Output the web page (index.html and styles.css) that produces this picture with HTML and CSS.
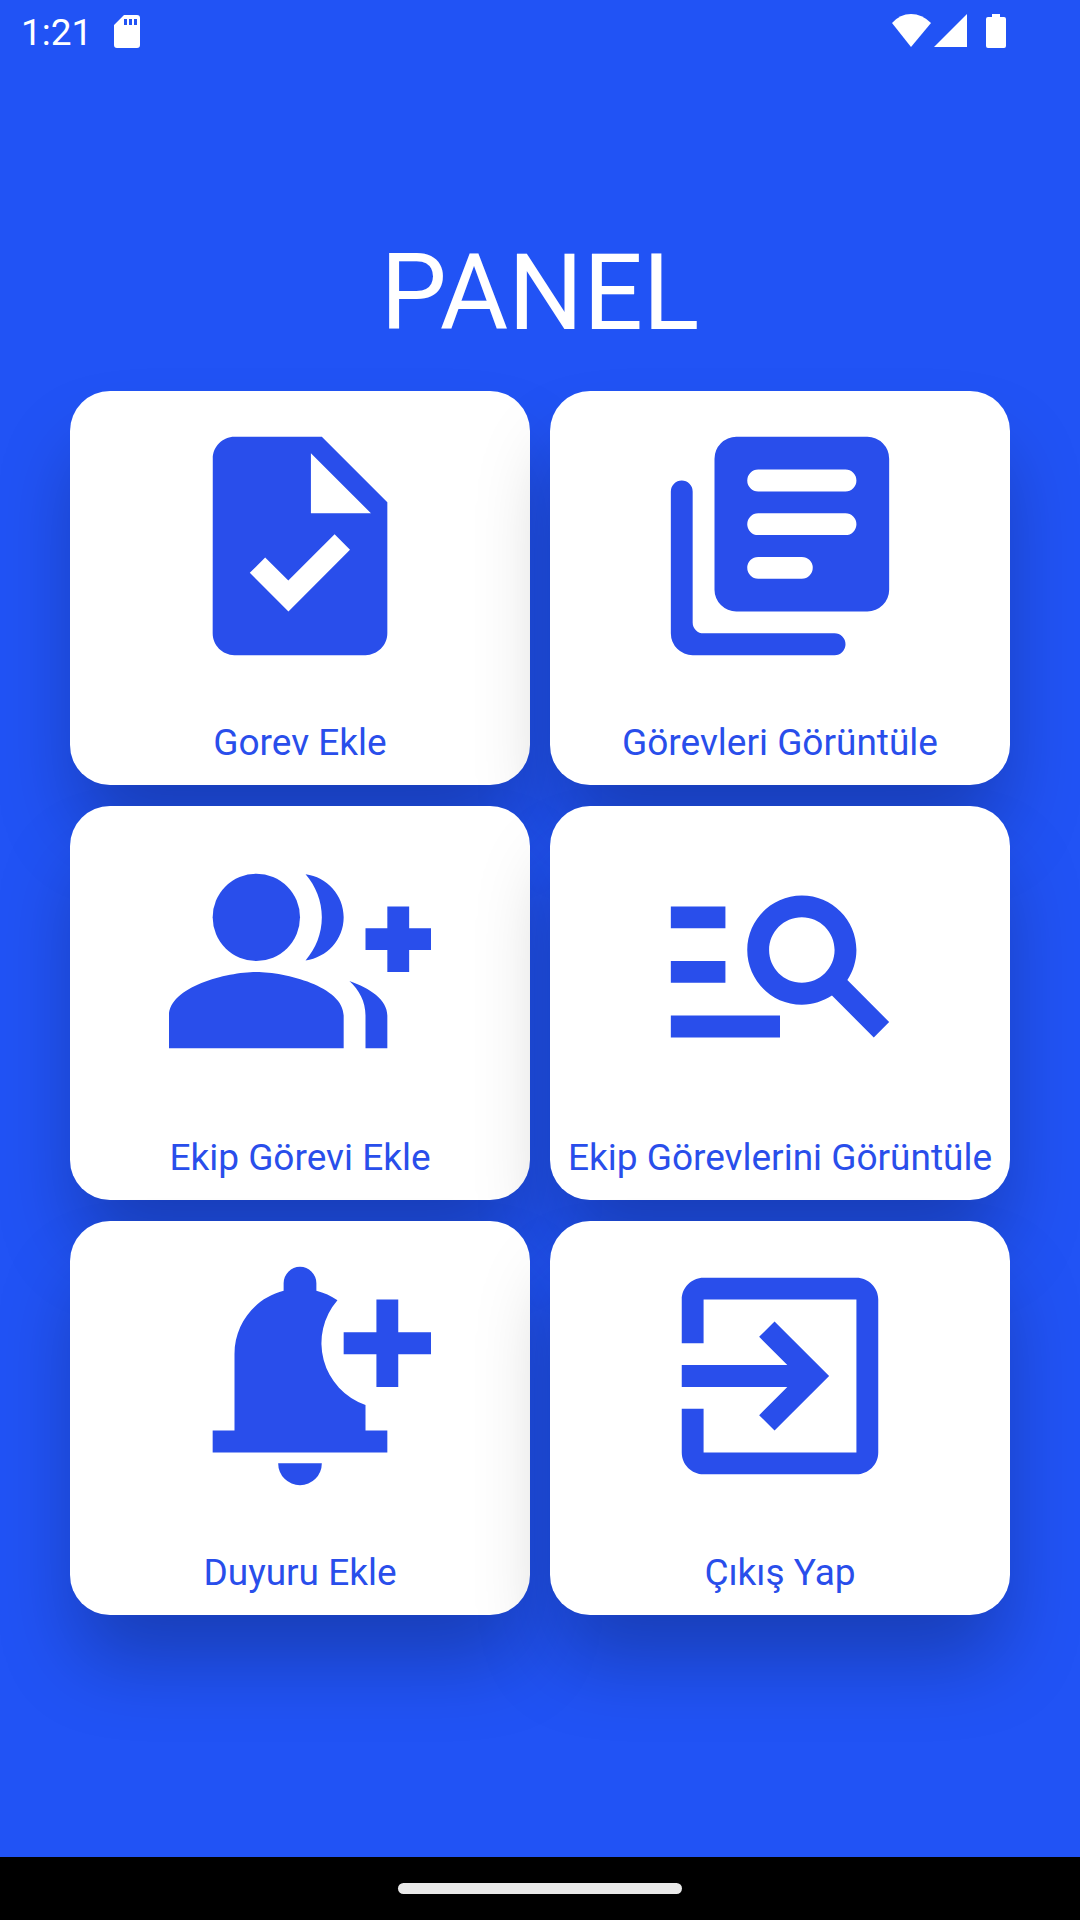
FILE: index.html
```html
<!DOCTYPE html>
<html lang="tr">
<head>
<meta charset="utf-8">
<meta name="viewport" content="width=device-width, initial-scale=1">
<title>Panel</title>
<link rel="stylesheet" href="styles.css">
</head>
<body>
<header class="status">
  <span class="status-time">1:21</span>
  <svg class="status-sd" viewBox="0 0 26 33" aria-hidden="true"><path fill-rule="evenodd" d="M10 0H23a3 3 0 0 1 3 3V30a3 3 0 0 1-3 3H3a3 3 0 0 1-3-3V10zM10 4v6h3V4zM15 4v6h3V4zM20 4v6h3V4z"/></svg>
  <div class="status-right">
    <svg class="status-wifi" viewBox="0 0 39 34" aria-hidden="true"><path d="M0 9Q8 0 19 0T39 9L19 33z"/></svg>
    <svg class="status-signal" viewBox="0 0 33 34" aria-hidden="true"><path d="M33 0V33H0z"/></svg>
    <svg class="status-battery" viewBox="0 0 20 34" aria-hidden="true"><path d="M6 0h8v3h4a2 2 0 0 1 2 2v27a2 2 0 0 1-2 2H2a2 2 0 0 1-2-2V5a2 2 0 0 1 2-2h4z"/></svg>
  </div>
</header>
<main class="panel">
  <h1 class="title">PANEL</h1>
  <div class="grid">
    <button class="card" type="button">
      <svg class="icon" viewBox="0 0 24 24" aria-hidden="true"><path d="M14 2H6c-1.1 0-1.99.9-1.99 2L4 20c0 1.1.89 2 1.99 2H18c1.1 0 2-.9 2-2V8l-6-6zm-3.06 16L7.4 14.46l1.41-1.41 2.12 2.12 4.24-4.24 1.41 1.41L10.94 18zM13 9V3.5L18.5 9H13z"/></svg>
      <span>Gorev Ekle</span>
    </button>
    <button class="card" type="button">
      <svg class="icon" viewBox="0 0 24 24" aria-hidden="true"><path fill-rule="evenodd" d="M8 2H20a2 2 0 0 1 2 2V16a2 2 0 0 1-2 2H8a2 2 0 0 1-2-2V4a2 2 0 0 1 2-2zM10 5a1 1 0 0 0 0 2h8a1 1 0 0 0 0-2zM10 9a1 1 0 0 0 0 2h8a1 1 0 0 0 0-2zM10 13a1 1 0 0 0 0 2h4a1 1 0 0 0 0-2z"/><path d="M3 6a1 1 0 0 1 1 1V19a1 1 0 0 0 1 1H17a1 1 0 0 1 0 2H4a2 2 0 0 1-2-2V7a1 1 0 0 1 1-1z"/></svg>
      <span>Görevleri Görüntüle</span>
    </button>
    <button class="card" type="button">
      <svg class="icon" viewBox="0 0 24 24" aria-hidden="true"><circle cx="8" cy="8" r="4"/><path d="M8 13c-2.67 0-8 1.34-8 4v3h16v-3c0-2.66-5.33-4-8-4zM12.51 4.05C13.43 5.11 14 6.49 14 8s-.57 2.89-1.49 3.95C14.47 11.7 16 10.04 16 8s-1.53-3.7-3.49-3.95zM16.53 13.83C17.42 14.66 18 15.7 18 17v3h2v-3c0-1.45-1.59-2.51-3.47-3.17zM22 9V7h-2v2h-2v2h2v2h2v-2h2V9z"/></svg>
      <span>Ekip Görevi Ekle</span>
    </button>
    <button class="card" type="button">
      <svg class="icon" viewBox="0 0 24 24" aria-hidden="true"><path d="M7 9H2V7h5v2zm0 3H2v2h5v-2zm13.59 7-3.83-3.83c-.8.52-1.74.83-2.76.83-2.76 0-5-2.24-5-5s2.24-5 5-5 5 2.24 5 5c0 1.02-.31 1.96-.83 2.75L22 17.59 20.59 19zM17 11c0-1.65-1.35-3-3-3s-3 1.35-3 3 1.35 3 3 3 3-1.35 3-3zM2 19h10v-2H2v2z"/></svg>
      <span>Ekip Görevlerini Görüntüle</span>
    </button>
    <button class="card" type="button">
      <svg class="icon" viewBox="0 0 24 24" aria-hidden="true"><path d="M6 17V10C6 7.2 7.9 4.85 10.5 4.2V3.5a1.5 1.5 0 0 1 3 0V4.2c.7.17 1.35.47 1.93.86A6 6 0 0 0 18 14.66V17h2v2H4v-2zM10 20h4a2 2 0 0 1-4 0zM21 8V5h-2v3h-3v2h3v3h2v-3h3V8z"/></svg>
      <span>Duyuru Ekle</span>
    </button>
    <button class="card" type="button">
      <svg class="icon" viewBox="0 0 24 24" aria-hidden="true"><path d="M10.09 15.59L11.5 17l5-5-5-5-1.41 1.41L12.67 11H3v2h9.67l-2.58 2.59zM19 3H5c-1.11 0-2 .9-2 2v4h2V5h14v14H5v-4H3v4c0 1.1.89 2 2 2h14c1.1 0 2-.9 2-2V5c0-1.1-.9-2-2-2z"/></svg>
      <span>Çıkış Yap</span>
    </button>
  </div>
</main>
<footer class="nav"><div class="nav-handle"></div></footer>
</body>
</html>
```

FILE: styles.css
```css
* {
  box-sizing: border-box;
}

body {
  margin: 0;
  min-height: 100vh;
  display: flex;
  flex-direction: column;
  background: #2153f5;
  color: #fff;
  font-family: Roboto, "Noto Sans", sans-serif;
}

.status {
  display: flex;
  align-items: flex-start;
  height: 64px;
  padding: 14px 74px 0 21px;
  fill: #fff;
}

.status-time {
  margin-top: -3px;
  font-size: 37px;
  line-height: 44px;
}

.status-sd {
  width: 26px;
  height: 33px;
  margin: 1px 0 0 22px;
}

.status-right {
  display: flex;
  margin-left: auto;
}

.status-wifi {
  width: 39px;
  height: 34px;
}

.status-signal {
  width: 33px;
  height: 34px;
  margin: 0 19px 0 3px;
}

.status-battery {
  width: 20px;
  height: 34px;
}

.panel {
  flex: 1;
  padding: 168px 70px 64px;
}

.title {
  margin: 0 0 35px;
  font-size: 105px;
  font-weight: 400;
  line-height: 124px;
  text-align: center;
}

.grid {
  display: grid;
  grid-template-columns: 1fr 1fr;
  gap: 21px 20px;
}

.card {
  display: flex;
  flex-direction: column;
  align-items: center;
  gap: 44px;
  min-width: 0;
  padding: 24px 0 20px;
  border: 0;
  border-radius: 40px;
  background: #fff;
  box-shadow: 0 52px 80px -8px rgba(0, 0, 0, 0.26);
  color: #294eeb;
  font: inherit;
  font-size: 37px;
  line-height: 44px;
  white-space: nowrap;
  cursor: pointer;
}

.icon {
  width: 262px;
  height: 262px;
  fill: currentColor;
}

.nav {
  display: flex;
  align-items: center;
  justify-content: center;
  height: 63px;
  background: #000;
}

.nav-handle {
  width: 284px;
  height: 11px;
  border-radius: 6px;
  background: #e9e9e9;
}
```
